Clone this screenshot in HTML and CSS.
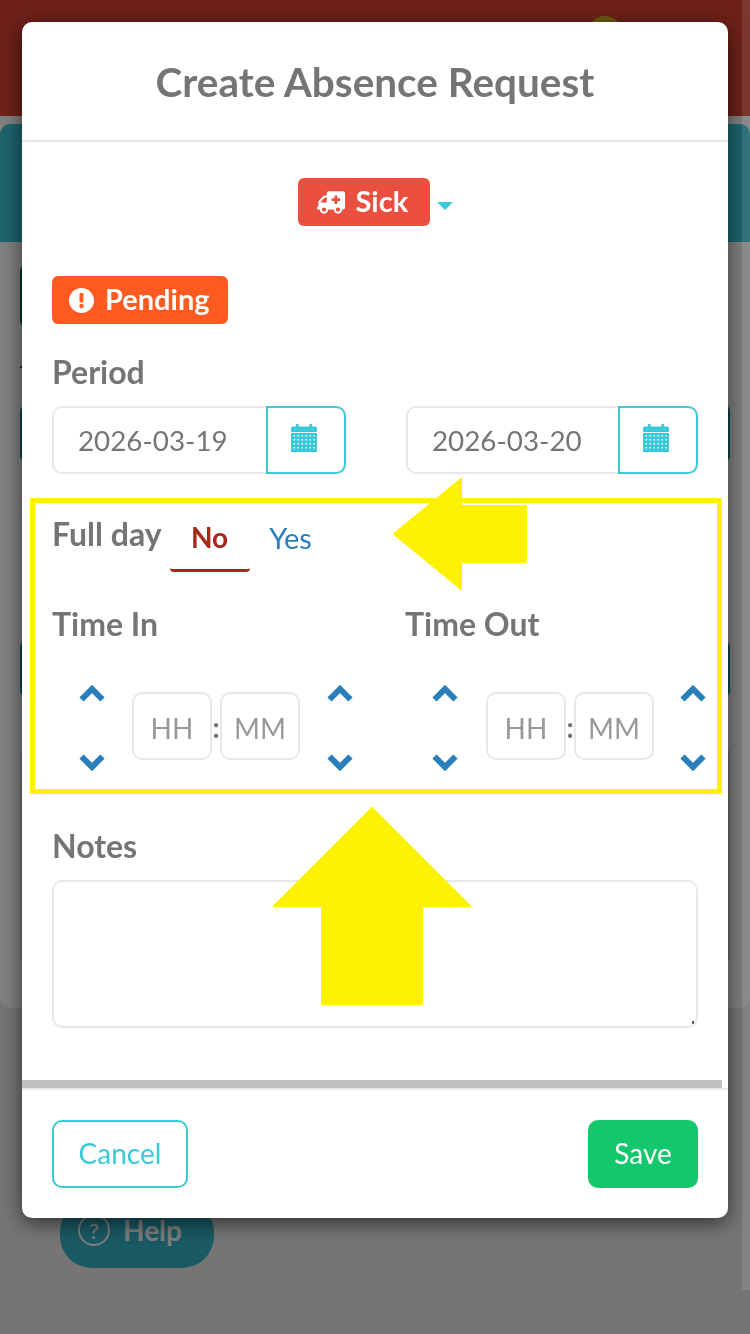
FILE: index.html
```html
<!DOCTYPE html>
<html lang="en">
<head>
<meta charset="UTF-8">
<title>Create Absence Request</title>
<link rel="stylesheet" href="styles.css">
</head>
<body>
    <svg class="defs" width="0" height="0">
        <defs>
            <symbol id="calendar" viewBox="0 0 26 28">
                <path d="M5 0h2.500v2.500h11V0H21v2.500h3a2 2 0 0 1 2 2V8H0V4.500a2 2 0 0 1 2-2h3z" fill="#3ac9d9"/>
                <rect x="0" y="9" width="26" height="19" fill="#3ac9d9"/>
                <g fill="#fff">
                    <path d="M2.500 11h1.500v1.500H2.500zM6.500 11h1.500v1.500H6.500zM10.500 11h1.500v1.500h-1.500zM14.500 11h1.500v1.500h-1.500zM18.500 11h1.500v1.500h-1.500zM22.500 11h1.500v1.500h-1.500z"/>
                    <path d="M2.500 15h1.500v1.500H2.500zM6.500 15h1.500v1.500H6.500zM10.500 15h1.500v1.500h-1.500zM14.500 15h1.500v1.500h-1.500zM18.500 15h1.500v1.500h-1.500zM22.500 15h1.500v1.500h-1.500z"/>
                    <path d="M2.500 19h1.500v1.500H2.500zM6.500 19h1.500v1.500H6.500zM10.500 19h1.500v1.500h-1.500zM14.500 19h1.500v1.500h-1.500zM18.500 19h1.500v1.500h-1.500zM22.500 19h1.500v1.500h-1.500z"/>
                    <path d="M2.500 23h1.500v1.500H2.500zM6.500 23h1.500v1.500H6.500zM10.500 23h1.500v1.500h-1.500zM14.500 23h1.500v1.500h-1.500zM18.500 23h1.500v1.500h-1.500zM22.500 23h1.500v1.500h-1.500z"/>
                </g>
            </symbol>
            <symbol id="chevUp" viewBox="0 0 26 17">
                <path d="M2.500 14.500 13 4l10.500 10.500" fill="none" stroke="#2a7fba" stroke-width="6"/>
            </symbol>
            <symbol id="chevDown" viewBox="0 0 26 17">
                <path d="M2.500 2.500 13 13 23.500 2.500" fill="none" stroke="#2a7fba" stroke-width="6"/>
            </symbol>
        </defs>
    </svg>

    <!-- page behind the dialog -->
    <div class="page">
        <div class="top-bar"><span class="avatar"></span></div>
        <div class="content">
            <div class="banner"></div>
            <div class="bg-green"></div>
            <div class="bg-tick"></div>
            <div class="bg-teal first"></div>
            <div class="bg-teal second"></div>
            <div class="bg-panel"></div>
        </div>
        <div class="help-btn">
            <span class="help-icon">?</span>
            <span>Help</span>
        </div>
    </div>
    <div class="backdrop"></div>
    <div class="scroll-strip"></div>

    <div class="modal">
        <div class="modal-header">
            <h1>Create Absence Request</h1>
        </div>
        <div class="modal-body">
            <div class="type-row">
                <span class="badge badge-sick">
                    <svg class="icon-ambulance" viewBox="0 0 640 512"><path fill="#fff" transform="matrix(-1 0 0 1 640 0)" d="M624 352h-16V243.900c0-12.700-5.100-24.900-14.100-33.900L494 110.100c-9-9-21.200-14.100-33.900-14.100H416V48c0-26.500-21.500-48-48-48H48C21.500 0 0 21.500 0 48v320c0 26.500 21.500 48 48 48h16c0 53 43 96 96 96s96-43 96-96h128c0 53 43 96 96 96s96-43 96-96h48c8.800 0 16-7.200 16-16v-32c0-8.800-7.200-16-16-16zM160 464c-26.500 0-48-21.500-48-48s21.500-48 48-48 48 21.500 48 48-21.500 48-48 48zm144-248c0 4.400-3.600 8-8 8h-56v56c0 4.400-3.600 8-8 8h-48c-4.400 0-8-3.600-8-8v-56h-56c-4.400 0-8-3.600-8-8v-48c0-4.400 3.600-8 8-8h56v-56c0-4.400 3.600-8 8-8h48c4.400 0 8 3.600 8 8v56h56c4.400 0 8 3.600 8 8v48zm176 248c-26.500 0-48-21.500-48-48s21.500-48 48-48 48 21.500 48 48-21.500 48-48 48zm80-208H416V144h44.100l99.900 99.900V256z"/></svg>
                    <span class="badge-text">Sick</span>
                </span>
                <span class="caret"></span>
            </div>

            <span class="badge badge-pending">
                <svg class="icon-alert" viewBox="0 0 25 25">
                    <circle cx="12.500" cy="12.500" r="12.500" fill="#fff"/>
                    <rect x="10.500" y="5" width="4" height="9.500" rx="1" fill="#ff5a20"/>
                    <rect x="10.500" y="16" width="4" height="4" rx="1" fill="#ff5a20"/>
                </svg>
                <span class="badge-text">Pending</span>
            </span>

            <label class="field-label period-label">Period</label>
            <div class="period-row">
                <div class="date-group">
                    <input class="date-input" type="text" value="2026-03-19">
                    <button class="cal-btn"><svg class="icon-cal"><use href="#calendar"/></svg></button>
                </div>
                <div class="date-group">
                    <input class="date-input" type="text" value="2026-03-20">
                    <button class="cal-btn"><svg class="icon-cal"><use href="#calendar"/></svg></button>
                </div>
            </div>

            <div class="fullday-row">
                <label class="field-label">Full day</label>
                <div class="tabs">
                    <span class="tab active">No</span>
                    <span class="tab tab-yes">Yes</span>
                </div>
            </div>

            <div class="time-row">
                <div class="time-col">
                    <label class="field-label">Time In</label>
                    <div class="time-picker">
                        <div class="spin"><svg class="chev"><use href="#chevUp"/></svg><svg class="chev"><use href="#chevDown"/></svg></div>
                        <input class="time-input" type="text" placeholder="HH">
                        <span class="colon">:</span>
                        <input class="time-input" type="text" placeholder="MM">
                        <div class="spin"><svg class="chev"><use href="#chevUp"/></svg><svg class="chev"><use href="#chevDown"/></svg></div>
                    </div>
                </div>
                <div class="time-col">
                    <label class="field-label">Time Out</label>
                    <div class="time-picker">
                        <div class="spin"><svg class="chev"><use href="#chevUp"/></svg><svg class="chev"><use href="#chevDown"/></svg></div>
                        <input class="time-input" type="text" placeholder="HH">
                        <span class="colon">:</span>
                        <input class="time-input" type="text" placeholder="MM">
                        <div class="spin"><svg class="chev"><use href="#chevUp"/></svg><svg class="chev"><use href="#chevDown"/></svg></div>
                    </div>
                </div>
            </div>

            <label class="field-label notes-label">Notes</label>
            <textarea class="notes"></textarea>
        </div>
        <div class="scroll-bar"></div>
        <div class="modal-footer">
            <button class="btn btn-cancel">Cancel</button>
            <button class="btn btn-save">Save</button>
        </div>
    </div>

    <!-- yellow annotations drawn over the screenshot -->
    <div class="mark-box"></div>
    <svg class="mark-arrows" viewBox="0 0 750 1334">
        <polygon points="394,534 461,479 461,506 526,506 526,562 461,562 461,589"/>
        <polygon points="372,808 470,906 422,906 422,1004 322,1004 322,906 274,906"/>
    </svg>
</body>
</html>
```

FILE: styles.css
```css
html, body {
    margin: 0;
    height: 1334px;
    overflow: hidden;
}
body {
    font-family: 'Lato', 'Open Sans', sans-serif;
    color: #757575;
    background-color: #ecebe7;
}
.defs {
    display: block;
    height: 0;
}

/* page behind the dialog */
.top-bar {
    height: 116px;
    box-sizing: border-box;
    padding: 16px 128px 0 0;
    display: flex;
    justify-content: flex-end;
    background-color: #dc4232;
}
.avatar {
    width: 34px;
    height: 34px;
    border-radius: 50%;
    background-color: #dcb420;
}
.content {
    height: 892px;
    box-sizing: border-box;
    padding-top: 8px;
    background-color: #fff;
    border-radius: 0 0 10px 10px;
}
.banner {
    height: 118px;
    background-color: #3ac9d9;
    border-radius: 10px 10px 0 0;
}
.bg-green {
    width: 200px;
    height: 62px;
    margin: 23px 0 0 20px;
    border-radius: 6px;
    background-color: #0a7a48;
}
.bg-tick {
    width: 30px;
    height: 2px;
    margin: 39px 0 0 20px;
    background-color: #6b4a30;
}
.bg-teal {
    height: 57px;
    margin: 0 20px;
    border-radius: 6px;
    background-color: #1f8f9c;
}
.bg-teal.first {
    margin-top: 37px;
}
.bg-teal.second {
    margin-top: 179px;
    height: 56px;
}
.bg-panel {
    height: 210px;
    margin: 53px 20px 0;
    background-color: #e4e4e4;
}
.help-btn {
    width: 154px;
    height: 68px;
    box-sizing: border-box;
    margin: 192px 0 0 60px;
    padding: 0 0 8px 18px;
    display: flex;
    align-items: center;
    gap: 13px;
    border-radius: 32px;
    background-color: #34b4c8;
    color: #fafafa;
    font-size: 28px;
    font-weight: 700;
}
.help-icon {
    width: 28px;
    height: 28px;
    border: 2px solid #fafafa;
    border-radius: 50%;
    display: flex;
    align-items: center;
    justify-content: center;
    font-size: 22px;
    font-weight: 400;
}
.backdrop {
    position: fixed;
    inset: 0;
    background-color: rgba(0, 0, 0, 0.5);
}
.scroll-strip {
    position: fixed;
    top: 0;
    right: 0;
    width: 8px;
    height: 1290px;
    background-color: rgba(255, 255, 255, 0.1);
}

/* dialog */
.modal {
    position: fixed;
    top: 22px;
    left: 22px;
    width: 706px;
    height: 1196px;
    display: flex;
    flex-direction: column;
    background-color: #fff;
    border-radius: 10px;
    box-shadow: 0 5px 20px rgba(0, 0, 0, 0.6);
}
.modal-header {
    height: 118px;
    display: flex;
    align-items: center;
    justify-content: center;
    border-bottom: 2px solid #e8e8e8;
}
h1 {
    margin: 0;
    font-size: 40.5px;
    font-weight: 700;
    color: #757575;
}
.modal-body {
    flex: 1;
    box-sizing: border-box;
    padding: 36px 30px 0;
}
.type-row {
    display: flex;
    justify-content: center;
    align-items: center;
    gap: 7px;
    height: 48px;
}
.badge {
    display: inline-flex;
    align-items: center;
    box-sizing: border-box;
    height: 48px;
    border-radius: 6px;
    color: #fff;
    font-weight: 700;
    font-size: 29px;
}
.badge-text {
    margin-bottom: 3px;
}
.badge-sick {
    width: 132px;
    padding-left: 19px;
    gap: 11px;
    background-color: #ea4f3f;
}
.badge-pending {
    width: 176px;
    margin-top: 50px;
    padding-left: 17px;
    gap: 11px;
    background-color: #ff5a20;
}
.icon-ambulance {
    width: 28px;
    height: 23px;
}
.icon-alert {
    width: 25px;
    height: 25px;
}
.caret {
    width: 0;
    height: 0;
    margin-top: 7px;
    border-left: 8px solid transparent;
    border-right: 8px solid transparent;
    border-top: 8px solid #3ac9d9;
}
.field-label {
    display: block;
    height: 40px;
    line-height: 40px;
    font-size: 32px;
    font-weight: 700;
    color: #757575;
}
.period-label {
    margin: 28px 0 14px;
}
.period-row {
    display: grid;
    grid-template-columns: 294px 292px;
    justify-content: space-between;
}
.date-group {
    display: flex;
    height: 68px;
}
.date-input {
    flex: 1;
    min-width: 0;
    box-sizing: border-box;
    padding: 0 0 0 24px;
    border: 2px solid #e8e8e8;
    border-right: none;
    border-radius: 10px 0 0 10px;
    font-family: inherit;
    font-size: 27.8px;
    color: #757575;
    outline: none;
}
.cal-btn {
    width: 80px;
    box-sizing: border-box;
    padding: 0 4px 0 0;
    display: flex;
    align-items: center;
    justify-content: center;
    background-color: #fff;
    border: 2px solid #3ac9d9;
    border-radius: 0 10px 10px 0;
}
.icon-cal {
    width: 26px;
    height: 28px;
    margin-bottom: 4px;
}
.fullday-row {
    display: flex;
    margin-top: 32px;
    height: 66px;
}
.fullday-row .field-label {
    margin-top: 8px;
}
.tabs {
    display: flex;
    margin-left: 8px;
}
.tab {
    width: 80px;
    box-sizing: border-box;
    padding-top: 14px;
    text-align: center;
    font-size: 28px;
    color: #2a7fba;
}
.tab-yes {
    padding-left: 2px;
    font-size: 29px;
}
.tab.active {
    color: #a32a1a;
    font-weight: 700;
    border-bottom: 3px solid #a32a1a;
    border-radius: 0 0 4px 4px;
}
.time-row {
    display: grid;
    grid-template-columns: 353px 353px;
    margin-top: 32px;
}
.time-picker {
    display: flex;
    align-items: center;
    margin-top: 41px;
    height: 86px;
}
.spin {
    width: 80px;
    height: 86px;
    display: flex;
    flex-direction: column;
    align-items: center;
    justify-content: space-between;
}
.time-col + .time-col .spin:first-child {
    width: 81px;
    padding-right: 1px;
    box-sizing: border-box;
}
.time-col + .time-col .spin:last-child {
    width: 79px;
    margin-left: -1px;
}
.chev {
    display: block;
    width: 26px;
    height: 17px;
}
.time-input {
    width: 80px;
    height: 68px;
    box-sizing: border-box;
    margin-bottom: 4px;
    padding: 3px 0 0;
    text-align: center;
    border: 2px solid #e8e8e8;
    border-radius: 10px;
    font-family: inherit;
    font-size: 28px;
    outline: none;
}
.time-input::placeholder {
    color: #999;
}
.colon {
    width: 8px;
    margin-bottom: 2px;
    text-align: center;
    font-size: 28px;
    font-weight: 700;
    line-height: 1;
}
.notes-label {
    margin: 55px 0 14px;
}
.notes {
    display: block;
    width: 100%;
    height: 148px;
    box-sizing: border-box;
    border: 2px solid #e8e8e8;
    border-radius: 10px;
    outline: none;
    resize: none;
    background: linear-gradient(#555, #555) no-repeat right 2px bottom 2px / 2px 3px;
}
.scroll-bar {
    height: 8px;
    width: 700px;
    background-color: #c1c1c1;
}
.modal-footer {
    height: 130px;
    box-sizing: border-box;
    padding: 30px;
    display: flex;
    justify-content: space-between;
    border-top: 2px solid #e8e8e8;
}
.btn {
    height: 68px;
    box-sizing: border-box;
    border-radius: 10px;
    padding: 0 0 2px;
    font-family: inherit;
    font-size: 28px;
    cursor: pointer;
}
.btn-cancel {
    width: 136px;
    background-color: #fff;
    color: #3ac9d9;
    border: 2px solid #3ac9d9;
}
.btn-save {
    width: 110px;
    background-color: #12c76c;
    color: #fff;
    border: none;
}

/* annotations */
.mark-box {
    position: fixed;
    top: 498px;
    left: 30px;
    width: 692px;
    height: 296px;
    box-sizing: border-box;
    border: 5px solid #fff200;
}
.mark-arrows {
    position: fixed;
    top: 0;
    left: 0;
    width: 750px;
    height: 1334px;
}
.mark-arrows polygon {
    fill: #fff200;
    stroke: #fff200;
    stroke-width: 2;
    stroke-linejoin: round;
}
```
